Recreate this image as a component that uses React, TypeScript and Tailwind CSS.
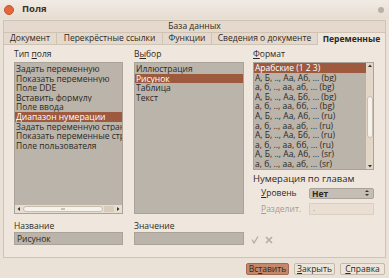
import React from "react";

const font = { fontFamily: '"Open Sans", "DejaVu Sans", sans-serif' };

function U({ children }: { children: React.ReactNode }) {
  return <span className="underline underline-offset-1">{children}</span>;
}

const types = [
  "Задать переменную",
  "Показать переменную",
  "Поле DDE",
  "Вставить формулу",
  "Поле ввода",
  "Диапазон нумерации",
  "Задать переменную страницы",
  "Показать переменные страницы",
  "Поле пользователя",
];

const choices = ["Иллюстрация", "Рисунок", "Таблица", "Текст"];

const formats = [
  "Арабские (1 2 3)",
  "А, Б, .., Аа, Аб, ... (bg)",
  "а, б, .., аа, аб, ... (bg)",
  "А, Б, .., Аа, Бб, ... (bg)",
  "а, б, .., аа, бб, ... (bg)",
  "А, Б, .., Аа, Аб, ... (ru)",
  "а, б, .., аа, аб, ... (ru)",
  "А, Б, .., Аа, Бб, ... (ru)",
  "а, б, .., аа, бб, ... (ru)",
  "А, Б, .., Аа, Аб, ... (sr)",
  "а, б, .., аа, аб, ... (sr)",
];

function Row({ text, active }: { text: string; active?: boolean }) {
  return (
    <div
      className={
        "h-[9.6px] leading-[9.6px] pl-[1px] whitespace-nowrap overflow-hidden " +
        (active ? "bg-[#9d5a3e] text-white" : "text-[#2d2924]")
      }
    >
      {text}
    </div>
  );
}

function Arrow({ dir }: { dir: "up" | "down" | "left" | "right" }) {
  const pts = {
    up: "1,4 3,1.5 5,4",
    down: "1,2 3,4.5 5,2",
    left: "4,1 1.5,3 4,5",
    right: "2,1 4.5,3 2,5",
  }[dir];
  return (
    <svg width="6" height="6" viewBox="0 0 6 6" className="shrink-0">
      <polygon points={pts} fill="#3a342e" />
    </svg>
  );
}

export default function App() {
  return (
    <div style={font} className="w-[389px] h-[278px] bg-[#ebe2d7] flex flex-col overflow-hidden text-[8.5px] text-[#2d2924]">
      {/* title bar */}
      <div className="h-[19px] flex items-center bg-gradient-to-b from-[#f1ebe4] to-[#e6ddd2] shrink-0">
        <div className="ml-[4px] w-[10px] h-[10px] rounded-full bg-[#e2683b] border border-[#c4532b]" />
        <div className="ml-[8px] font-bold text-[9.5px] text-[#3a332c]">Поля</div>
        <div className="flex-1" />
        <div className="mr-[5px] w-[6px] h-[6px] rounded-full bg-[#b9b0a6]" />
      </div>

      <div className="px-[3px] flex flex-col flex-1">
        {/* tab row 1 */}
        <div className="h-[12px] mt-[1px] border border-b-0 border-[#cfc3b4] bg-[#e4d9cc] flex items-center justify-center">
          База данных
        </div>
        {/* tab row 2 */}
        <div className="h-[13px] flex">
          <div className="w-[54px] border border-[#cfc3b4] bg-[#e4d9cc] flex items-center justify-center">Документ</div>
          <div className="w-[106px] border border-l-0 border-[#cfc3b4] bg-[#e4d9cc] flex items-center justify-center">Перекрёстные ссылки</div>
          <div className="w-[49px] border border-l-0 border-[#cfc3b4] bg-[#e4d9cc] flex items-center justify-center">Функции</div>
          <div className="w-[106px] border border-l-0 border-[#cfc3b4] bg-[#e4d9cc] flex items-center justify-center">Сведения о документе</div>
          <div className="flex-1 border border-l-0 border-b-0 border-[#cfc3b4] bg-[#efe7dd] flex items-center justify-center font-bold">Переменные</div>
        </div>

        {/* panel */}
        <div className="h-[213px] border border-t-0 border-[#cfc3b4] bg-[#efe7dd] flex flex-col pl-[10px]">
          <div className="flex mt-[4px]">
            {/* col 1 */}
            <div className="w-[109px] flex flex-col">
              <div className="h-[13px] leading-[10px]">Тип <U>п</U>оля</div>
              <div className="h-[152px] bg-[#bab4aa] border border-[#aaa399] flex flex-col">
                <div className="flex-1 pt-[1px] overflow-hidden">
                  {types.map((t, i) => (
                    <Row key={t} text={t} active={i === 5} />
                  ))}
                </div>
                <div className="h-[8px] bg-[#e7ddd1] flex items-center px-[1px] gap-[1px]">
                  <Arrow dir="left" />
                  <div className="w-[80px] h-[6px] rounded-full bg-[#f6f1ea] border border-[#c9bdae] flex items-center justify-center">
                    <div className="w-[4px] h-[2px] border-y border-[#cbbfb0]" />
                  </div>
                  <div className="flex-1 h-[6px] bg-[#d8ccbd]" />
                  <Arrow dir="right" />
                </div>
              </div>
            </div>
            {/* col 2 */}
            <div className="w-[110px] ml-[11px] flex flex-col">
              <div className="h-[13px] leading-[10px]">В<U>ы</U>бор</div>
              <div className="h-[152px] bg-[#bab4aa] border border-[#aaa399] pt-[1px]">
                {choices.map((t, i) => (
                  <Row key={t} text={t} active={i === 1} />
                ))}
              </div>
            </div>
            {/* col 3 */}
            <div className="w-[121px] ml-[9px] flex flex-col">
              <div className="h-[13px] leading-[10px]"><U>Ф</U>ормат</div>
              <div className="h-[108px] bg-[#bab4aa] border border-[#aaa399] flex">
                <div className="flex-1 overflow-hidden">
                  {formats.map((t, i) => (
                    <Row key={t} text={t} active={i === 0} />
                  ))}
                </div>
                <div className="w-[7px] bg-[#e2d6c8] flex flex-col items-center">
                  <Arrow dir="up" />
                  <div className="h-[27px]" />
                  <div className="w-[6px] h-[42px] rounded-full bg-[#f6f1ea] border border-[#c9bdae]" />
                  <div className="flex-1" />
                  <Arrow dir="down" />
                </div>
              </div>
              <div className="mt-[3px] h-[11px] leading-[11px] text-[9.5px]">Нумерация по главам</div>
              <div className="mt-[3px] flex items-center">
                <div className="w-[56px] pl-[8px]"><U>У</U>ровень</div>
                <div className="w-[65px] h-[11px] bg-[#c5beb4] border border-[#aaa399] rounded-[2px] flex items-center pl-[2px] font-bold">
                  <span className="flex-1 leading-[9px]">Нет</span>
                  <svg width="6" height="8" viewBox="0 0 6 8" className="mr-[3px]">
                    <polygon points="1,3 3,1 5,3" fill="#3a342e" />
                    <polygon points="1,5 3,7 5,5" fill="#3a342e" />
                  </svg>
                </div>
              </div>
              <div className="mt-[3px] flex items-center">
                <div className="w-[56px] pl-[8px] text-[#a59c91]"><U>Р</U>азделит.</div>
                <div className="w-[65px] h-[12px] bg-[#eadfd2] border border-[#dccfbf] pl-[3px] text-[#a59c91] leading-[8px]">.</div>
              </div>
            </div>
          </div>

          {/* name / value */}
          <div className="flex mt-[5px]">
            <div className="w-[109px] flex flex-col">
              <div className="h-[11px] leading-[9px]">Название</div>
              <div className="h-[13px] bg-[#bab4aa] border border-[#aaa399] pl-[2px] leading-[11px]">Рисунок</div>
            </div>
            <div className="w-[110px] ml-[11px] flex flex-col">
              <div className="h-[11px] leading-[9px]">Значение</div>
              <div className="h-[13px] bg-[#bab4aa] border border-[#aaa399]" />
            </div>
            <div className="flex items-end gap-[6px] ml-[7px] pb-[1px]">
              <svg width="8" height="8" viewBox="0 0 8 8">
                <path d="M1 3.5 L3 7 L7 0.5" stroke="#b5aca1" strokeWidth="1.3" fill="none" />
              </svg>
              <svg width="8" height="8" viewBox="0 0 8 8">
                <path d="M1 1 L7 7 M7 1 L1 7" stroke="#b5aca1" strokeWidth="1.6" fill="none" />
              </svg>
            </div>
          </div>
        </div>

        {/* buttons */}
        <div className="flex justify-end gap-[5px] mt-[5px] pr-[1px]">
          <div className="w-[43px] h-[12px] rounded-[2px] bg-[#c3876c] border border-[#a36b52] flex items-center justify-center">Вс<U>т</U>авить</div>
          <div className="w-[41px] h-[12px] rounded-[2px] bg-[#ece5dc] border border-[#c5b9aa] flex items-center justify-center"><U>З</U>акрыть</div>
          <div className="w-[45px] h-[12px] rounded-[2px] bg-[#ece5dc] border border-[#c5b9aa] flex items-center justify-center"><U>С</U>правка</div>
        </div>
      </div>
    </div>
  );
}
